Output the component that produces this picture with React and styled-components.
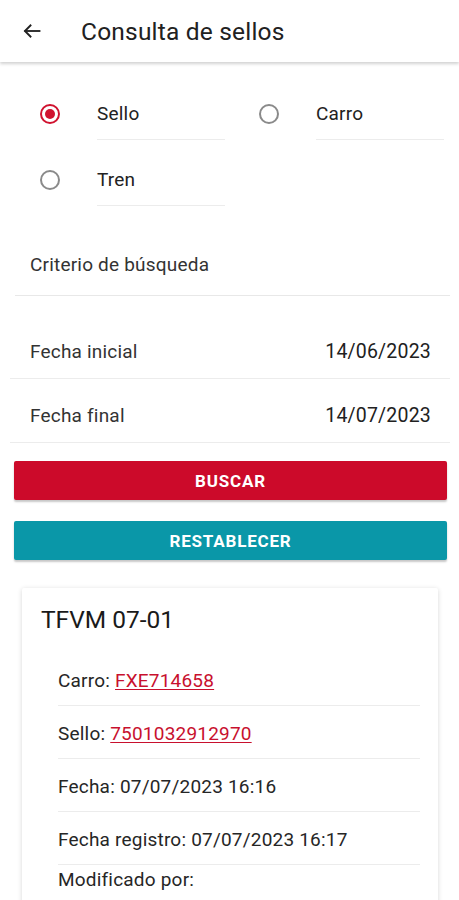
import React from "react";
import styled, { createGlobalStyle } from "styled-components";

const Global = createGlobalStyle`
  html, body { margin: 0; padding: 0; background: #fff; }
  body { font-family: Roboto, "Noto Sans", Arial, sans-serif; color: #212121; }
  * { box-sizing: border-box; }
`;

const Page = styled.div`
  width: 459px;
  min-height: 900px;
  background: #fff;
`;

const Header = styled.header`
  height: 62px;
  display: flex;
  align-items: center;
  background: #fff;
  box-shadow: 0 2px 3px rgba(0, 0, 0, 0.18);
  position: relative;
  z-index: 1;
`;

const BackButton = styled.button`
  border: 0;
  background: transparent;
  padding: 0;
  margin-left: 21px;
  width: 22px;
  height: 22px;
  display: flex;
  align-items: center;
  justify-content: center;
  color: #212121;
`;

const Title = styled.h1`
  margin: 0 0 0 38px;
  font-size: 24.5px;
  font-weight: 400;
  color: #212121;
  letter-spacing: 0.2px;
`;

const RadioGrid = styled.div`
  display: grid;
  grid-template-columns: 219px 200px;
  row-gap: 14px;
  padding: 26px 0 0 40px;
`;

const Option = styled.label`
  display: flex;
  align-items: center;
`;

const RadioCircle = styled.span`
  width: 20px;
  height: 20px;
  border-radius: 50%;
  border: 2px solid ${(p) => (p.$checked ? "#d0122f" : "#8a8a8a")};
  display: flex;
  align-items: center;
  justify-content: center;
  flex: none;
  &::after {
    content: "";
    width: 10px;
    height: 10px;
    border-radius: 50%;
    background: ${(p) => (p.$checked ? "#d0122f" : "transparent")};
  }
`;

const OptionField = styled.span`
  margin-left: 37px;
  width: 128px;
  flex: none;
  height: 52px;
  display: flex;
  align-items: center;
  font-size: 19px;
  letter-spacing: 0.2px;
  color: #222;
  border-bottom: 1px solid #ececec;
`;

const Criterio = styled.div`
  margin: 28px 9px 0 15px;
  height: 62px;
  padding-left: 15px;
  display: flex;
  align-items: center;
  font-size: 19px;
  letter-spacing: 0.2px;
  color: #333;
  border-bottom: 1px solid #e8e8e8;
`;

const DateList = styled.div`
  margin: 19px 9px 0 10px;
`;

const DateRow = styled.div`
  height: 64px;
  display: flex;
  align-items: center;
  justify-content: space-between;
  padding: 10px 19px 0 20px;
  font-size: 19px;
  letter-spacing: 0.2px;
  border-bottom: 1px solid #ececec;
`;

const DateLabel = styled.span`
  color: #333;
`;

const DateValue = styled.span`
  color: #212121;
  font-size: 19.5px;
`;

const Buttons = styled.div`
  display: flex;
  flex-direction: column;
  gap: 21px;
  margin: 18px 12px 0 14px;
`;

const ActionButton = styled.button`
  height: 39px;
  border: 0;
  border-radius: 2px;
  background: ${(p) => p.$bg};
  color: #fff;
  font-family: Roboto, Arial, sans-serif;
  font-size: 17px;
  font-weight: 700;
  letter-spacing: 0.8px;
  box-shadow: 0 2px 2px rgba(0, 0, 0, 0.22);
`;

const Card = styled.section`
  margin: 28px 21px 0 22px;
  background: #fff;
  box-shadow: 0 1px 5px rgba(0, 0, 0, 0.16);
  border-radius: 2px;
  padding: 16px 18px 20px 19px;
`;

const CardTitle = styled.h2`
  margin: 0;
  font-size: 24.5px;
  font-weight: 400;
  color: #1a1a1a;
  line-height: 32px;
`;

const InfoList = styled.div`
  margin: 17px 0 0 17px;
`;

const InfoRow = styled.div`
  height: ${(p) => (p.$last ? "auto" : "53px")};
  display: flex;
  align-items: ${(p) => (p.$last ? "flex-start" : "center")};
  padding-top: ${(p) => (p.$last ? "3px" : "2px")};
  font-size: 19px;
  letter-spacing: 0.2px;
  color: #262626;
  border-bottom: ${(p) => (p.$last ? "0" : "1px solid #ececec")};
`;

const LinkValue = styled.a`
  margin-left: 5px;
  color: #c8102e;
  text-decoration: underline;
  text-decoration-thickness: 1px;
  text-underline-offset: 2px;
`;

const PlainValue = styled.span`
  margin-left: 5px;
`;

function BackArrow() {
  return (
    <svg width="20" height="20" viewBox="0 0 24 24" fill="none" stroke="currentColor" strokeWidth="2.2" strokeLinecap="square">
      <path d="M21 12H4" />
      <path d="M11 4.5 3.5 12l7.5 7.5" strokeLinecap="butt" />
    </svg>
  );
}

export default function App() {
  return (
    <Page>
      <Global />
      <Header>
        <BackButton aria-label="Atrás">
          <BackArrow />
        </BackButton>
        <Title>Consulta de sellos</Title>
      </Header>

      <RadioGrid>
        <Option>
          <RadioCircle $checked />
          <OptionField>Sello</OptionField>
        </Option>
        <Option>
          <RadioCircle />
          <OptionField>Carro</OptionField>
        </Option>
        <Option>
          <RadioCircle />
          <OptionField>Tren</OptionField>
        </Option>
      </RadioGrid>

      <Criterio>Criterio de búsqueda</Criterio>

      <DateList>
        <DateRow>
          <DateLabel>Fecha inicial</DateLabel>
          <DateValue>14/06/2023</DateValue>
        </DateRow>
        <DateRow>
          <DateLabel>Fecha final</DateLabel>
          <DateValue>14/07/2023</DateValue>
        </DateRow>
      </DateList>

      <Buttons>
        <ActionButton $bg="#cc0a2a">BUSCAR</ActionButton>
        <ActionButton $bg="#0a97a8">RESTABLECER</ActionButton>
      </Buttons>

      <Card>
        <CardTitle>TFVM 07-01</CardTitle>
        <InfoList>
          <InfoRow>
            Carro:<LinkValue>FXE714658</LinkValue>
          </InfoRow>
          <InfoRow>
            Sello:<LinkValue>7501032912970</LinkValue>
          </InfoRow>
          <InfoRow>
            Fecha:<PlainValue>07/07/2023 16:16</PlainValue>
          </InfoRow>
          <InfoRow>
            Fecha registro:<PlainValue>07/07/2023 16:17</PlainValue>
          </InfoRow>
          <InfoRow $last>Modificado por:</InfoRow>
        </InfoList>
      </Card>
    </Page>
  );
}
